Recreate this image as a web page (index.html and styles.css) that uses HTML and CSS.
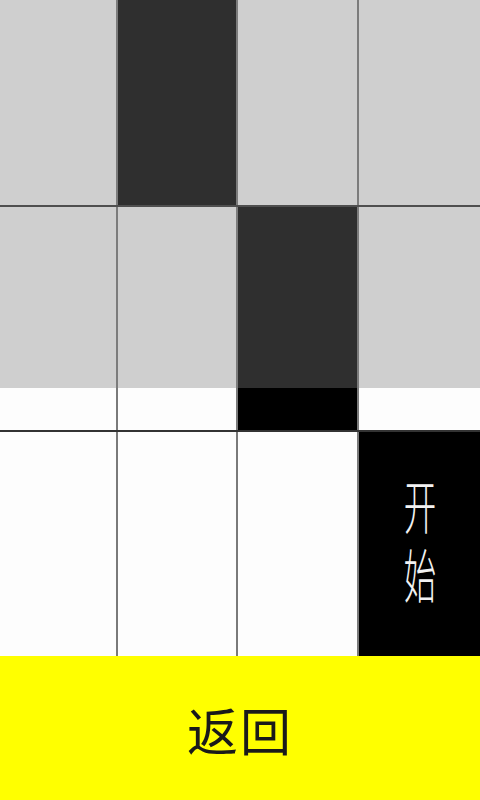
FILE: index.html
```html
<!DOCTYPE html>
<html lang="zh-CN">
<head>
<meta charset="utf-8">
<title>别踩白块</title>
<link rel="stylesheet" href="styles.css">
</head>
<body>
<div class="screen">
  <div class="board">
    <div class="row row-top">
      <div class="tile"></div>
      <div class="tile black"></div>
      <div class="tile"></div>
      <div class="tile"></div>
    </div>
    <div class="row row-mid">
      <div class="tile"></div>
      <div class="tile"></div>
      <div class="tile black"></div>
      <div class="tile"></div>
    </div>
    <div class="row row-bottom">
      <div class="tile"></div>
      <div class="tile"></div>
      <div class="tile"></div>
      <div class="tile black start">
        <span class="start-label">开始</span>
      </div>
    </div>
    <div class="dim"></div>
  </div>
  <div class="back">返回</div>
</div>
</body>
</html>
```

FILE: styles.css
```css
html, body {
  margin: 0;
  padding: 0;
  background: #ffffff;
}

.screen {
  width: 480px;
  height: 800px;
  overflow: hidden;
  display: flex;
  flex-direction: column;
  font-family: "Noto Sans CJK SC", "Noto Sans", sans-serif;
}

.board {
  position: relative;
  display: flex;
  flex-direction: column;
  gap: 2px;
  background: #333333;
  height: 656px;
}

.row {
  display: grid;
  grid-template-columns: 116px 118px 119px 1fr;
  gap: 2px;
  background: #7a7a7a;
}

.row-top { height: 205px; }
.row-mid { height: 223px; }
.row-bottom { height: 224px; }

.tile {
  background: #fdfdfd;
}

.tile.black {
  background: #000000;
}

.start {
  display: flex;
  align-items: center;
  justify-content: center;
}

.start-label {
  display: block;
  writing-mode: vertical-rl;
  text-orientation: upright;
  color: #f2f2f2;
  font-size: 58px;
  font-weight: 300;
  line-height: 58px;
  letter-spacing: 11px;
  transform: scaleX(0.56);
  margin-top: 6px;
}

.dim {
  position: absolute;
  top: 0;
  left: 0;
  right: 0;
  height: 388px;
  background: rgba(128, 128, 128, 0.37);
}

.back {
  flex: 1;
  background: #ffff00;
  display: flex;
  align-items: center;
  justify-content: center;
  padding-top: 2px;
  font-size: 51px;
  color: #1a1a1a;
  letter-spacing: 2px;
}
```
